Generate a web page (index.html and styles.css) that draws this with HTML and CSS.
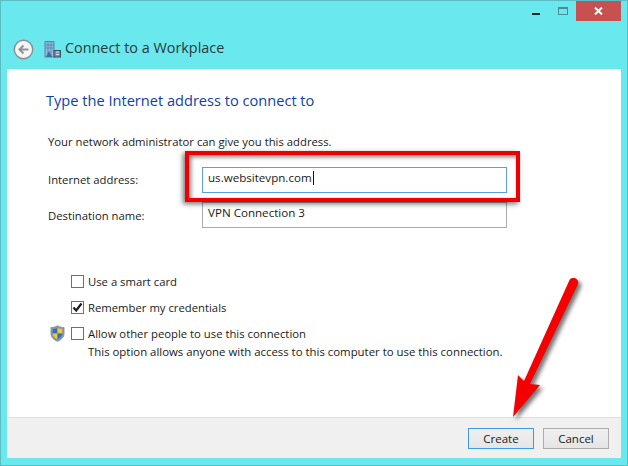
FILE: index.html
```html
<!DOCTYPE html>
<html>
<head>
  <title>Connect to a Workplace</title>
  <meta charset="UTF-8">
  <link rel="stylesheet" href="styles.css">
</head>
<body>
  <div class="window">
    <div class="caption">
      <div class="min-button"><span class="min-glyph"></span></div>
      <div class="max-button"><span class="max-glyph"></span></div>
      <div class="close-button">
        <svg width="9" height="8" viewBox="0 0 9 8"><path d="M1 0.5 L8 7.5 M8 0.5 L1 7.5" stroke="#fff" stroke-width="2" fill="none"/></svg>
      </div>
    </div>
    <div class="nav-bar">
      <svg class="back-icon" width="21" height="21" viewBox="0 0 21 21">
        <circle cx="10.5" cy="10.5" r="9.2" fill="#f4f6f6" stroke="#8a8f90" stroke-width="1.4"/>
        <path d="M15.5 10.5 H7 M10.5 6.5 L6.5 10.5 L10.5 14.5" stroke="#8d9294" stroke-width="2" fill="none"/>
      </svg>
      <svg class="app-icon" width="17" height="17" viewBox="0 0 17 17">
        <rect x="1" y="0.5" width="9" height="15.5" fill="#8fb9dc" stroke="#5b86a8"/>
        <path d="M4 1 V16 M7 1 V16 M1 4 H10 M1 7 H10" stroke="#4f7fa6" stroke-width="0.7"/>
        <path d="M2 16 L5 10 L8 16 Z" fill="#3d6f96"/>
        <rect x="10" y="9.5" width="6.5" height="6.5" fill="#6f8ea8" stroke="#3b5468"/>
        <path d="M12 11 H15 M12 13.5 H15" stroke="#dce8f0"/>
      </svg>
      <span class="nav-title">Connect to a Workplace</span>
    </div>
    <div class="panel">
      <div class="content">
        <h1 class="heading">Type the Internet address to connect to</h1>
        <p class="hint">Your network administrator can give you this address.</p>
        <div class="form-row first-row">
          <label class="field-label">Internet address:</label>
          <div class="text-field focused">us.websitevpn.com<span class="caret"></span></div>
        </div>
        <div class="form-row">
          <label class="field-label second-label">Destination name:</label>
          <div class="text-field">VPN Connection 3</div>
        </div>
        <div class="options">
          <div class="option"><span class="checkbox"></span>Use a smart card</div>
          <div class="option">
            <span class="checkbox">
              <svg width="11" height="11" viewBox="0 0 11 11"><path d="M1.5 5.5 L4.2 8.5 L9.5 1.5" stroke="#1c1c1c" stroke-width="2.2" fill="none"/></svg>
            </span>Remember my credentials
          </div>
          <div class="option shield-option">
            <svg class="shield" width="15" height="17" viewBox="0 0 16 18">
              <path d="M8 0.7 C6 2 3.5 2.6 1 2.7 V9 C1 13 4 15.8 8 17.3 C12 15.8 15 13 15 9 V2.7 C12.5 2.6 10 2 8 0.7 Z" fill="#8d97a3" stroke="#7d8894" stroke-width="0.8"/>
              <path d="M8 3 C6.6 3.8 5 4.2 3 4.3 V9 H8 Z" fill="#2d6fc4"/>
              <path d="M8 3 C9.4 3.8 11 4.2 13 4.3 V9 H8 Z" fill="#f5c92f"/>
              <path d="M3 9 C3 11.8 5 13.7 8 15 V9 Z" fill="#f5c92f"/>
              <path d="M13 9 C13 11.8 11 13.7 8 15 V9 Z" fill="#2d6fc4"/>
            </svg>
            <span class="checkbox"></span>Allow other people to use this connection
          </div>
          <div class="option-note">This option allows anyone with access to this computer to use this connection.</div>
        </div>
      </div>
      <div class="footer">
        <button class="button default-button">Create</button>
        <button class="button">Cancel</button>
      </div>
    </div>

    <!-- annotations drawn over the screenshot -->
    <div class="red-box"></div>
    <svg class="red-arrow" width="628" height="466" viewBox="0 0 628 466">
      <path d="M569.5 280 C571 277.5 575 277.5 577 279.5 C578.5 281 578.5 283 577.5 285 L530 384 L540 385 L513 417 L518 375 L524 381 Z" fill="#f40000"/>
    </svg>
  </div>
</body>
</html>
```
FILE: styles.css
```css
* {
  box-sizing: border-box;
}
html, body {
  margin: 0;
  padding: 0;
}
body {
  width: 628px;
  height: 466px;
  overflow: hidden;
  font-family: "Open Sans", sans-serif;
  font-size: 11.3px;
  color: #1a1a1a;
}
.window {
  position: relative;
  width: 628px;
  height: 466px;
  display: flex;
  flex-direction: column;
  background-color: #69e8ee;
  border: 1px solid #5cbcc4;
  padding: 0 6px 7px 6px;
}
.caption {
  height: 20px;
  display: flex;
  justify-content: flex-end;
}
.min-button, .max-button {
  width: 26px;
  display: flex;
  justify-content: center;
}
.min-button {
  padding-right: 2px;
}
.min-glyph {
  width: 8px;
  height: 2px;
  margin-top: 12px;
  background-color: #222;
}
.max-glyph {
  width: 10px;
  height: 8px;
  margin-top: 6px;
  border: 1px solid #4f8a92;
  border-top-width: 2px;
}
.close-button {
  width: 45px;
  height: 20px;
  background-color: #c75050;
  display: flex;
  align-items: center;
  justify-content: center;
}
.nav-bar {
  height: 48px;
  display: flex;
  align-items: center;
  padding-left: 6px;
  padding-top: 8px;
}
.back-icon {
  margin-right: 10px;
}
.app-icon {
  margin-right: 4px;
}
.nav-title {
  font-size: 14.4px;
  color: #2b3a3c;
  margin-bottom: 3px;
}
.panel {
  flex: 1;
  display: flex;
  flex-direction: column;
  background-color: #fff;
}
.content {
  flex: 1;
  padding: 0 0 0 39px;
}
.heading {
  margin: 21px 0 0 0;
  font-size: 14.6px;
  font-weight: normal;
  line-height: 20px;
  color: #0d3fb0;
}
.hint {
  margin: 24px 0 0 2px;
  line-height: 16px;
}
.form-row {
  display: flex;
  align-items: center;
  margin-top: 9px;
  margin-left: 2px;
  height: 26px;
}
.first-row {
  margin-top: 17px;
}
.field-label {
  width: 154px;
  margin-bottom: 2px;
}
.second-label {
  margin-bottom: 0;
}
.text-field {
  width: 305px;
  height: 26px;
  line-height: 20px;
  padding-left: 5px;
  border: 1px solid #aaa;
  font-size: 11.6px;
}
.focused {
  border-color: #5a9ee6;
}
.caret {
  display: inline-block;
  width: 1px;
  height: 14px;
  margin-left: 1px;
  vertical-align: -3px;
  background-color: #111;
}
.options {
  margin-top: 40px;
  margin-left: 25px;
}
.option {
  position: relative;
  display: flex;
  align-items: center;
  height: 26px;
}
.checkbox {
  width: 13px;
  height: 13px;
  margin-right: 4px;
  border: 1px solid #707070;
  background-color: #fff;
  display: flex;
  align-items: center;
  justify-content: center;
}
.shield {
  position: absolute;
  left: -21px;
  top: 5px;
}
.option-note {
  margin-left: 17px;
  line-height: 12px;
  font-size: 11.4px;
}
.footer {
  height: 41px;
  display: flex;
  justify-content: flex-end;
  align-items: center;
  gap: 9px;
  padding-right: 12px;
  background-color: #f0f0f0;
  border-top: 1px solid #dfdfdf;
}
.button {
  width: 66px;
  height: 21px;
  padding: 0;
  font-family: inherit;
  font-size: 11.5px;
  color: #1a1a1a;
  border: 1px solid #acacac;
  background: linear-gradient(#f0f0f0, #e5e5e5);
}
.default-button {
  border-color: #3c9be8;
}
.red-box {
  position: absolute;
  left: 184px;
  top: 150px;
  width: 335px;
  height: 51px;
  border: 4px solid #ee0000;
  box-shadow: -2px 2px 5px rgba(0, 0, 0, 0.55), inset 2px 2px 4px rgba(0, 0, 0, 0.5);
}
.red-arrow {
  position: absolute;
  left: -1px;
  top: -1px;
  filter: drop-shadow(3px 3px 2px rgba(0, 0, 0, 0.55));
}
```
